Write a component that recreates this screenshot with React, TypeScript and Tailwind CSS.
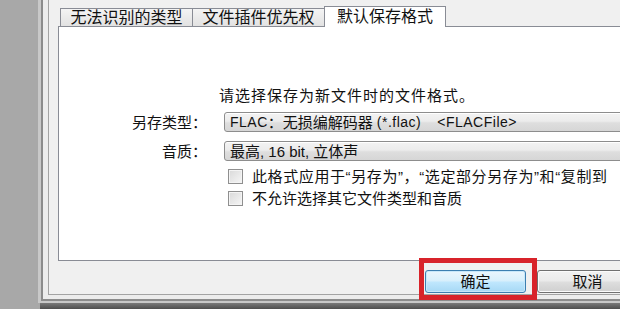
import React from 'react';

const font = "font-['Liberation_Sans','Noto_Sans_CJK_SC',sans-serif]";

function Tab({ label, active, width }: { label: string; active?: boolean; width: string }) {
  if (active) {
    return (
      <div
        className={`${width} relative z-10 -ml-px -mb-px h-[21px] border border-b-0 border-[#898c95] bg-white flex items-center justify-center text-[16px] leading-none text-[#111]`}
      >
        {label}
      </div>
    );
  }
  return (
    <div
      className={`${width} -ml-px first:ml-0 h-[18px] border border-b-0 border-[#898c95] bg-gradient-to-b from-[#f4f4f4] to-[#e2e2e2] flex items-center justify-center text-[16px] leading-none text-[#111]`}
    >
      {label}
    </div>
  );
}

function Combo({ children }: { children: React.ReactNode }) {
  return (
    <div className="h-[20px] rounded-[3px] border border-[#8d8d8d] bg-[linear-gradient(#f3f3f3_0%,#ececec_45%,#dedede_55%,#d6d6d6_100%)] flex items-center pl-[5px] text-[15px] leading-none text-[#111] whitespace-nowrap shadow-[inset_0_1px_0_#ffffff]">
      {children}
    </div>
  );
}

function Check({ label, wide }: { label: string; wide?: boolean }) {
  return (
    <div className="h-[22px] flex items-center pl-[4px] gap-[9px]">
      <div className="w-[15px] h-[15px] border border-[#8f8f8f] bg-[linear-gradient(135deg,#d9d9d9,#f6f6f6)] shadow-[inset_0_0_0_1px_#f4f4f4] shrink-0" />
      <span className={`text-[15px] leading-none text-[#111] whitespace-nowrap ${wide ? 'tracking-[0.6px]' : ''}`}>{label}</span>
    </div>
  );
}

export default function App() {
  return (
    <div className={`${font} relative w-[620px] h-[309px] overflow-hidden bg-[#a8a8a8] flex flex-col`}>
      <div className="flex h-[303px]">
        {/* desktop strip */}
        <div className="w-[38px] shrink-0" />
        {/* window frame */}
        <div className="flex-1 flex border-l-[3px] border-b-[2px] border-[#c8c8c8]">
          <div className="flex-1 flex border-l-[2px] border-b-[2px] border-[#8b8b8b] bg-[#ececec] pl-[5px] pb-[4px]">
            <div className="flex-1 border-l border-b border-[#a3a3a3] bg-[#f0f0f0] pl-[9px] pt-[6px] flex flex-col">
              {/* tabs */}
              <div className="flex items-end h-[20px] pl-[2px]">
                <Tab label="无法识别的类型" width="w-[133px]" />
                <Tab label="文件插件优先权" width="w-[133px]" />
                <Tab label="默认保存格式" width="w-[122px]" active />
              </div>
              {/* panel */}
              <div className="w-[640px] h-[235px] border border-[#898c95] bg-white pt-[58px]">
                <div className="h-[20px] pl-[160px] flex items-center text-[15px] tracking-[1px] leading-none text-[#111] whitespace-nowrap">
                  请选择保存为新文件时的文件格式。
                </div>
                <div className="grid grid-cols-[148px_1fr] gap-x-[17px] mt-[7px] items-center">
                  <div className="text-right text-[15px] leading-none text-[#111]">另存类型：</div>
                  <Combo>
                    <span className="text-[14px] tracking-[0.5px]">FLAC</span>
                    <span>：无损编解码器</span>
                    <span className="ml-[4px] text-[14px] tracking-[0.5px]">(*.flac)</span>
                    <span className="ml-[16px] text-[14px] tracking-[0.5px]">&lt;FLACFile&gt;</span>
                  </Combo>
                  <div className="text-right text-[15px] leading-none text-[#111] mt-[9px]">音质：</div>
                  <div className="mt-[9px]">
                    <Combo>最高, 16 bit, 立体声</Combo>
                  </div>
                  <div />
                  <div className="mt-[4px]">
                    <Check label="此格式应用于“另存为”，“选定部分另存为”和“复制到" wide />
                    <Check label="不允许选择其它文件类型和音质" />
                  </div>
                </div>
              </div>
              {/* buttons */}
              <div className="flex gap-[11px] pl-[367px] mt-[9px]">
                <button className="w-[101px] h-[23px] shrink-0 rounded-[3px] border border-[#3c7fb1] bg-[linear-gradient(#eaf6fd_0%,#d9f0fc_45%,#bee6fd_55%,#a7d9f5_100%)] shadow-[inset_0_0_0_1px_#c8e8fa] text-[15px] leading-none text-[#111]">
                  确定
                </button>
                <button className="w-[101px] h-[23px] shrink-0 rounded-[3px] border border-[#707070] bg-[linear-gradient(#f2f2f2_0%,#ebebeb_45%,#dddddd_55%,#cfcfcf_100%)] shadow-[inset_0_0_0_1px_#fbfbfb] text-[15px] leading-none text-[#111]">
                  取消
                </button>
              </div>
            </div>
          </div>
        </div>
      </div>
      {/* bottom edge */}
      <div className="flex h-[6px]">
        <div className="w-[40px] shrink-0" />
        <div className="flex-1 bg-gradient-to-b from-[#7a7a7a] to-[#4e4e4e]" />
      </div>
      {/* red highlight */}
      <div className="absolute left-[419px] top-[258px] w-[118px] h-[42px] border-[5px] border-[#d8232a]" />
    </div>
  );
}
